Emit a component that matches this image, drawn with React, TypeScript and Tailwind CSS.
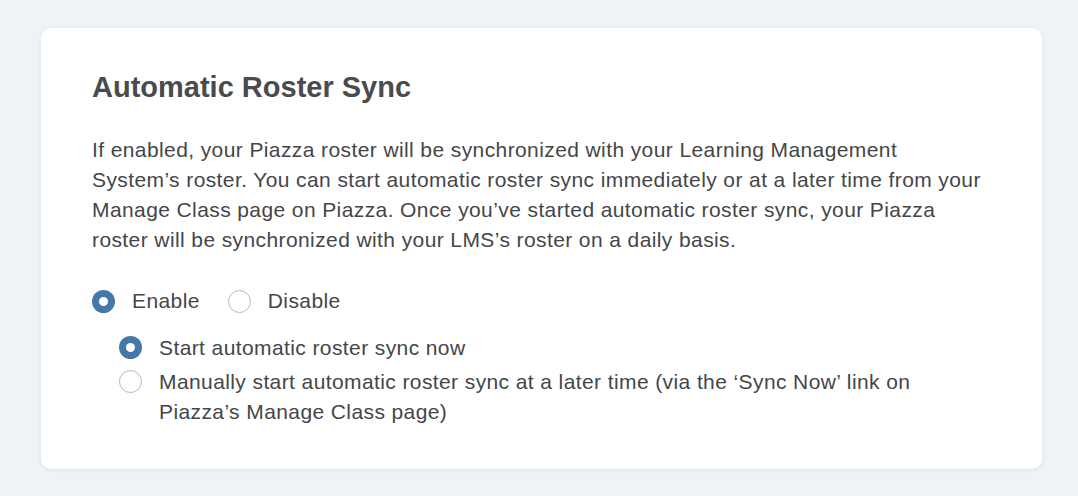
import React, { useState } from 'react';

const Radio: React.FC<{ checked: boolean; onClick: () => void }> = ({ checked, onClick }) => (
  <button
    type="button"
    onClick={onClick}
    className={
      checked
        ? 'shrink-0 w-[23px] h-[23px] rounded-full bg-[#4677a8] flex items-center justify-center'
        : 'shrink-0 w-[23px] h-[23px] rounded-full border-[1.5px] border-[#b3b8bd] bg-white'
    }
  >
    {checked && <span className="w-[9px] h-[9px] rounded-full bg-white" />}
  </button>
);

export default function App() {
  const [enabled, setEnabled] = useState(true);
  const [mode, setMode] = useState<'now' | 'later'>('now');

  return (
    <div className="min-h-[496px] bg-[#f0f3f5] pt-[28px] pl-[41px] pr-[36px] pb-[27px] font-['Liberation_Sans',Helvetica,Arial,sans-serif]">
      <div className="bg-white rounded-[10px] shadow-[0_1px_4px_rgba(0,0,0,0.08)] pt-[41px] pl-[51px] pr-[40px] h-[441px]">
        <h2 className="text-[29px] leading-[36px] font-semibold text-[#4a4b4d]">Automatic Roster Sync</h2>

        <p className="mt-[30px] text-[21px] leading-[30px] tracking-[0.4px] text-[#454648] max-w-[893px]">
          If enabled, your Piazza roster will be synchronized with your Learning Management System’s roster. You can
          start automatic roster sync immediately or at a later time from your Manage Class page on Piazza. Once you’ve
          started automatic roster sync, your Piazza roster will be synchronized with your LMS’s roster on a daily
          basis.
        </p>

        {/* Enable / Disable */}
        <div className="mt-[31px] flex items-center h-[30px] text-[21px] tracking-[0.4px] text-[#454648]">
          <Radio checked={enabled} onClick={() => setEnabled(true)} />
          <span className="ml-[17px]">Enable</span>
          <span className="ml-[28px] flex">
            <Radio checked={!enabled} onClick={() => setEnabled(false)} />
          </span>
          <span className="ml-[17px]">Disable</span>
        </div>

        {/* Sub options */}
        <div className="mt-[17px] pl-[27px] flex flex-col gap-[4px] text-[21px] leading-[30px] tracking-[0.4px] text-[#454648]">
          <div className="flex items-start gap-[17px]">
            <span className="mt-[3px] flex">
              <Radio checked={mode === 'now'} onClick={() => setMode('now')} />
            </span>
            <span>Start automatic roster sync now</span>
          </div>
          <div className="flex items-start gap-[17px]">
            <span className="mt-[3px] flex">
              <Radio checked={mode === 'later'} onClick={() => setMode('later')} />
            </span>
            <span className="max-w-[770px]">
              Manually start automatic roster sync at a later time (via the ‘Sync Now’ link on Piazza’s Manage Class
              page)
            </span>
          </div>
        </div>
      </div>
    </div>
  );
}
